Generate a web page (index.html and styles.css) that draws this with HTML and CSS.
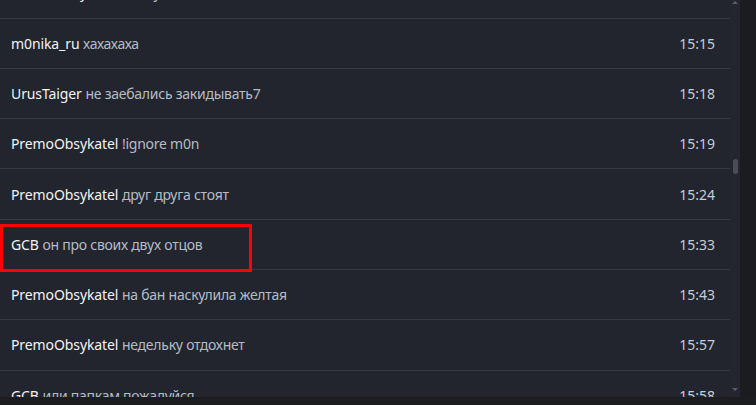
FILE: index.html
```html
<!DOCTYPE html>
<html lang="ru">
<head>
    <meta charset="UTF-8">
    <title>Чат</title>
    <link rel="stylesheet" href="styles.css">
</head>
<body>
    <div class="window">
        <div class="main">
            <div class="chat-log">
                <div class="message-list">
                    <div class="message-row">
                        <div class="message-text"><span class="nick">PremoObsykatel</span> <span class="body">ахах у</span></div>
                        <span class="time">15:14</span>
                    </div>
                    <div class="message-row">
                        <div class="message-text"><span class="nick">m0nika_ru</span> <span class="body">хахахаха</span></div>
                        <span class="time">15:15</span>
                    </div>
                    <div class="message-row">
                        <div class="message-text"><span class="nick">UrusTaiger</span> <span class="body">не заебались закидывать7</span></div>
                        <span class="time">15:18</span>
                    </div>
                    <div class="message-row">
                        <div class="message-text"><span class="nick">PremoObsykatel</span> <span class="body">!ignore m0n</span></div>
                        <span class="time">15:19</span>
                    </div>
                    <div class="message-row">
                        <div class="message-text"><span class="nick">PremoObsykatel</span> <span class="body">друг друга стоят</span></div>
                        <span class="time">15:24</span>
                    </div>
                    <div class="message-row marked">
                        <div class="message-text"><span class="nick">GCB</span> <span class="body">он про своих двух отцов</span></div>
                        <span class="time">15:33</span>
                        <span class="mark-box"></span>
                    </div>
                    <div class="message-row">
                        <div class="message-text"><span class="nick">PremoObsykatel</span> <span class="body">на бан наскулила желтая</span></div>
                        <span class="time">15:43</span>
                    </div>
                    <div class="message-row">
                        <div class="message-text"><span class="nick">PremoObsykatel</span> <span class="body">недельку отдохнет</span></div>
                        <span class="time">15:57</span>
                    </div>
                    <div class="message-row">
                        <div class="message-text"><span class="nick">GCB</span> <span class="body">или папкам пожалуйся</span></div>
                        <span class="time">15:58</span>
                    </div>
                </div>
            </div>
            <div class="scrollbar">
                <span class="arrow arrow-up"></span>
                <div class="track">
                    <span class="thumb"></span>
                </div>
                <span class="arrow arrow-down"></span>
            </div>
            <div class="side-gap"></div>
        </div>
        <div class="bottom-bar"></div>
    </div>
</body>
</html>
```

FILE: styles.css
```css
body {
    margin: 0;
    background-color: #1b1c1f;
    font-family: "Noto Sans", "Open Sans", sans-serif;
}

.window {
    width: 756px;
    height: 405px;
    display: flex;
    flex-direction: column;
    overflow: hidden;
}

.main {
    display: flex;
    height: 397px;
}

.chat-log {
    width: 730px;
    background-color: #22252d;
    overflow: hidden;
}

.message-list {
    margin-top: -32.2px;
}

.message-row {
    position: relative;
    height: 50.28px;
    box-sizing: border-box;
    border-bottom: 1px solid #363942;
    padding: 0 15px 0 11px;
    display: flex;
    justify-content: space-between;
    align-items: center;
    font-size: 14px;
}

.message-row:first-child {
    height: 50.88px;
}

.nick {
    color: #f2f3f5;
    letter-spacing: -0.1px;
}

.body {
    color: #b4bcc8;
    letter-spacing: -0.25px;
}

.time {
    color: #c4ccd8;
}

/* красная рамка поверх строки */
.mark-box {
    position: absolute;
    left: 0;
    top: 4px;
    width: 252px;
    height: 48px;
    box-sizing: border-box;
    border: 3px solid #ff0000;
}

.scrollbar {
    width: 10px;
    background-color: #23262e;
    display: flex;
    flex-direction: column;
    align-items: center;
}

.track {
    flex: 1;
    width: 100%;
    display: flex;
    justify-content: center;
}

.thumb {
    width: 5px;
    height: 15px;
    margin-top: 155px;
    border-radius: 3px;
    background-color: #4a4d55;
}

.arrow {
    width: 0;
    height: 0;
    border-left: 3px solid transparent;
    border-right: 3px solid transparent;
}

.arrow-up {
    margin-top: 1px;
    border-bottom: 3px solid #5a5d65;
}

.arrow-down {
    margin-bottom: 6px;
    border-top: 3px solid #5a5d65;
}

.side-gap {
    flex: 1;
    background-color: #1b1c1f;
}

.bottom-bar {
    height: 8px;
    background-color: #1c1d20;
}
```
